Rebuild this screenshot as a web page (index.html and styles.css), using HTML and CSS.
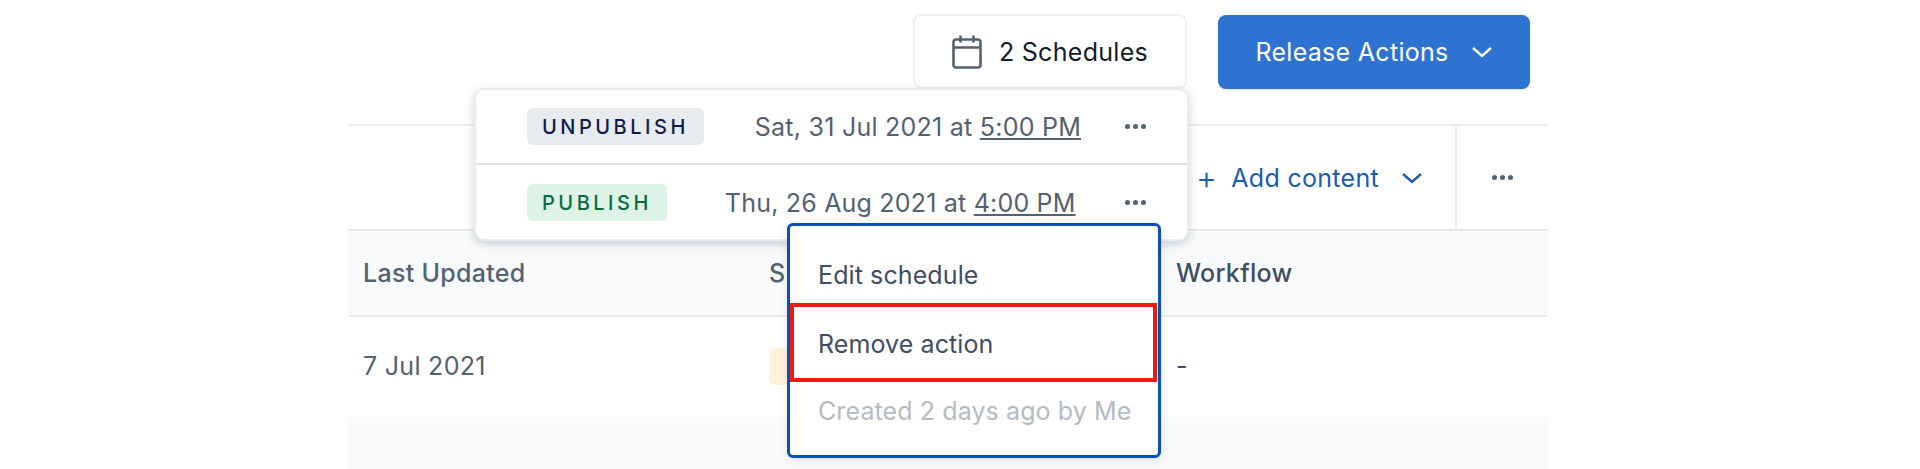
FILE: index.html
```html
<!DOCTYPE html>
<html lang="en">
<head>
  <meta charset="UTF-8">
  <title>Release schedules</title>
  <link rel="stylesheet" href="styles.css">
</head>
<body>
  <div class="topbar">
    <button class="btn-schedules">
      <svg class="icon-cal" viewBox="0 0 30 34" width="30" height="34" fill="none" stroke="#536171" stroke-width="2.6">
        <rect x="1.5" y="4.5" width="27" height="28" rx="2.5"/>
        <path d="M1.5 12.5h27M8.5 0.5v7M21.5 0.5v7"/>
      </svg>
      2 Schedules
    </button>
    <button class="btn-release">
      Release Actions
      <svg viewBox="0 0 22 12" width="22" height="12" fill="none" stroke="#fff" stroke-width="2.4"><path d="M2 2l9 8 9-8"/></svg>
    </button>
  </div>

  <div class="table-wrap">
    <div class="toolbar">
      <div class="add-content">
        <span class="plus">+</span>
        <span>Add content</span>
        <svg viewBox="0 0 22 12" width="22" height="12" fill="none" stroke="#1a5cb0" stroke-width="2.4"><path d="M2 2l9 8 9-8"/></svg>
      </div>
      <div class="toolbar-more"><span class="dots"><i></i><i></i><i></i></span></div>
    </div>
    <div class="row head">
      <div class="col-updated">Last Updated</div>
      <div class="col-status">S</div>
      <div class="col-workflow">Workflow</div>
    </div>
    <div class="row body-row">
      <div class="col-updated">7 Jul 2021</div>
      <div class="col-status"><span class="status-badge"></span></div>
      <div class="col-workflow">-</div>
    </div>
    <div class="row empty-row"></div>
  </div>

  <div class="schedule-pop">
    <div class="sched-row">
      <span class="badge badge-grey">UNPUBLISH</span>
      <span class="sched-date">Sat, 31 Jul 2021 at <u>5:00 PM</u></span>
      <span class="dots"><i></i><i></i><i></i></span>
    </div>
    <div class="sched-row pub">
      <span class="badge badge-green">PUBLISH</span>
      <span class="sched-date">Thu, 26 Aug 2021 at <u>4:00 PM</u></span>
      <span class="dots"><i></i><i></i><i></i></span>
    </div>
  </div>

  <div class="action-menu">
    <div class="menu-item first">Edit schedule</div>
    <div class="menu-item marked">Remove action</div>
    <div class="menu-item muted">Created 2 days ago by Me</div>
  </div>
</body>
</html>
```

FILE: styles.css
```css
* {
  box-sizing: border-box;
}
html, body {
  margin: 0;
  height: 469px;
  overflow: hidden;
}
body {
  font-family: Inter, "Liberation Sans", sans-serif;
  font-size: 25px;
  letter-spacing: 0.3px;
  color: #414d63;
  background-color: #fff;
  position: relative;
}

.topbar {
  height: 124px;
  display: flex;
  justify-content: flex-end;
  align-items: flex-start;
  gap: 31px;
  padding: 14px 390px 0 0;
}
button {
  font-family: inherit;
  font-size: 25px;
  letter-spacing: 0.3px;
  display: flex;
  align-items: center;
  justify-content: center;
  cursor: pointer;
}
.btn-schedules {
  width: 274px;
  height: 75px;
  gap: 17px;
  background-color: #fff;
  color: #111b2b;
  border: 2px solid #eef0f2;
  border-radius: 8px;
}
.btn-release {
  width: 312px;
  height: 74px;
  margin-top: 1px;
  gap: 22px;
  background-color: #2e72d2;
  color: #fff;
  border: 0;
  border-radius: 8px;
  box-shadow: 0 1px 2px rgba(0, 0, 0, 0.1);
}

.table-wrap {
  margin-left: 348px;
  width: 1200px;
  border-top: 2px solid #eceff1;
}
.toolbar {
  height: 103px;
  display: flex;
  justify-content: flex-end;
  align-items: center;
}
.add-content {
  display: flex;
  align-items: center;
  color: #1a5cb0;
  gap: 14px;
  padding-right: 32px;
}
.add-content svg {
  margin-left: 8px;
}
.plus {
  font-size: 32px;
  line-height: 1;
  font-weight: 300;
}
.toolbar-more {
  width: 93px;
  height: 103px;
  border-left: 2px solid #eceff1;
  display: flex;
  align-items: center;
  justify-content: center;
}

.row {
  display: flex;
  align-items: center;
  padding-left: 15px;
}
.head {
  height: 88px;
  background-color: #f8fafb;
  border-top: 2px solid #e7ebee;
  border-bottom: 2px solid #e7ebee;
  font-weight: 500;
  color: #536171;
}
.body-row {
  height: 100px;
  padding-bottom: 2px;
  color: #536171;
}
.empty-row {
  height: 54px;
  background-color: #f8fafb;
}
.col-updated {
  width: 406px;
}
.col-status {
  width: 407px;
}
.col-workflow {
  color: #414d63;
}
.status-badge {
  display: block;
  width: 100px;
  height: 37px;
  background-color: #fdf1d8;
  border-radius: 6px;
}

.dots {
  display: inline-flex;
  gap: 3px;
}
.dots i {
  width: 5px;
  height: 5px;
  border-radius: 50%;
  background-color: #536171;
}

.schedule-pop {
  position: absolute;
  left: 474px;
  top: 88px;
  width: 715px;
  height: 153px;
  background-color: #fff;
  border: 2px solid #e9ecee;
  border-radius: 10px;
  box-shadow: 0 3px 10px rgba(25, 37, 50, 0.2);
}
.sched-row {
  height: 75px;
  display: flex;
  align-items: center;
  padding: 0 41px 0 51px;
  border-bottom: 2px solid #dfe3e6;
}
.sched-row.pub {
  border-bottom: 0;
}
.badge {
  height: 37px;
  padding: 0 15px;
  display: flex;
  align-items: center;
  border-radius: 6px;
  font-size: 20px;
  font-weight: 500;
  letter-spacing: 3.5px;
}
.badge-grey {
  background-color: #e7ebee;
  color: #111b4b;
}
.badge-green {
  background-color: #dcf3e6;
  color: #0b6a3d;
}
.sched-date {
  margin-left: 51px;
  margin-right: auto;
  color: #536171;
  letter-spacing: 0.25px;
}
.sched-row.pub .sched-date {
  margin-left: 58px;
  letter-spacing: 0.2px;
}

.action-menu {
  position: absolute;
  left: 787px;
  top: 223px;
  width: 374px;
  height: 235px;
  background-color: #fff;
  border: 3px solid #0a50bc;
  border-radius: 6px;
  box-shadow: 0 3px 10px rgba(25, 37, 50, 0.1);
  letter-spacing: 0.1px;
}
.menu-item {
  padding: 0 28px;
  display: flex;
  align-items: center;
  white-space: nowrap;
}
.menu-item.first {
  height: 77px;
  padding-top: 20px;
}
.menu-item.marked {
  height: 79px;
  padding: 3px 24px 0;
  border: 4px solid #ef1a10;
  margin-right: 1px;
}
.menu-item.muted {
  height: 58px;
  color: #b4bbc3;
}
```
